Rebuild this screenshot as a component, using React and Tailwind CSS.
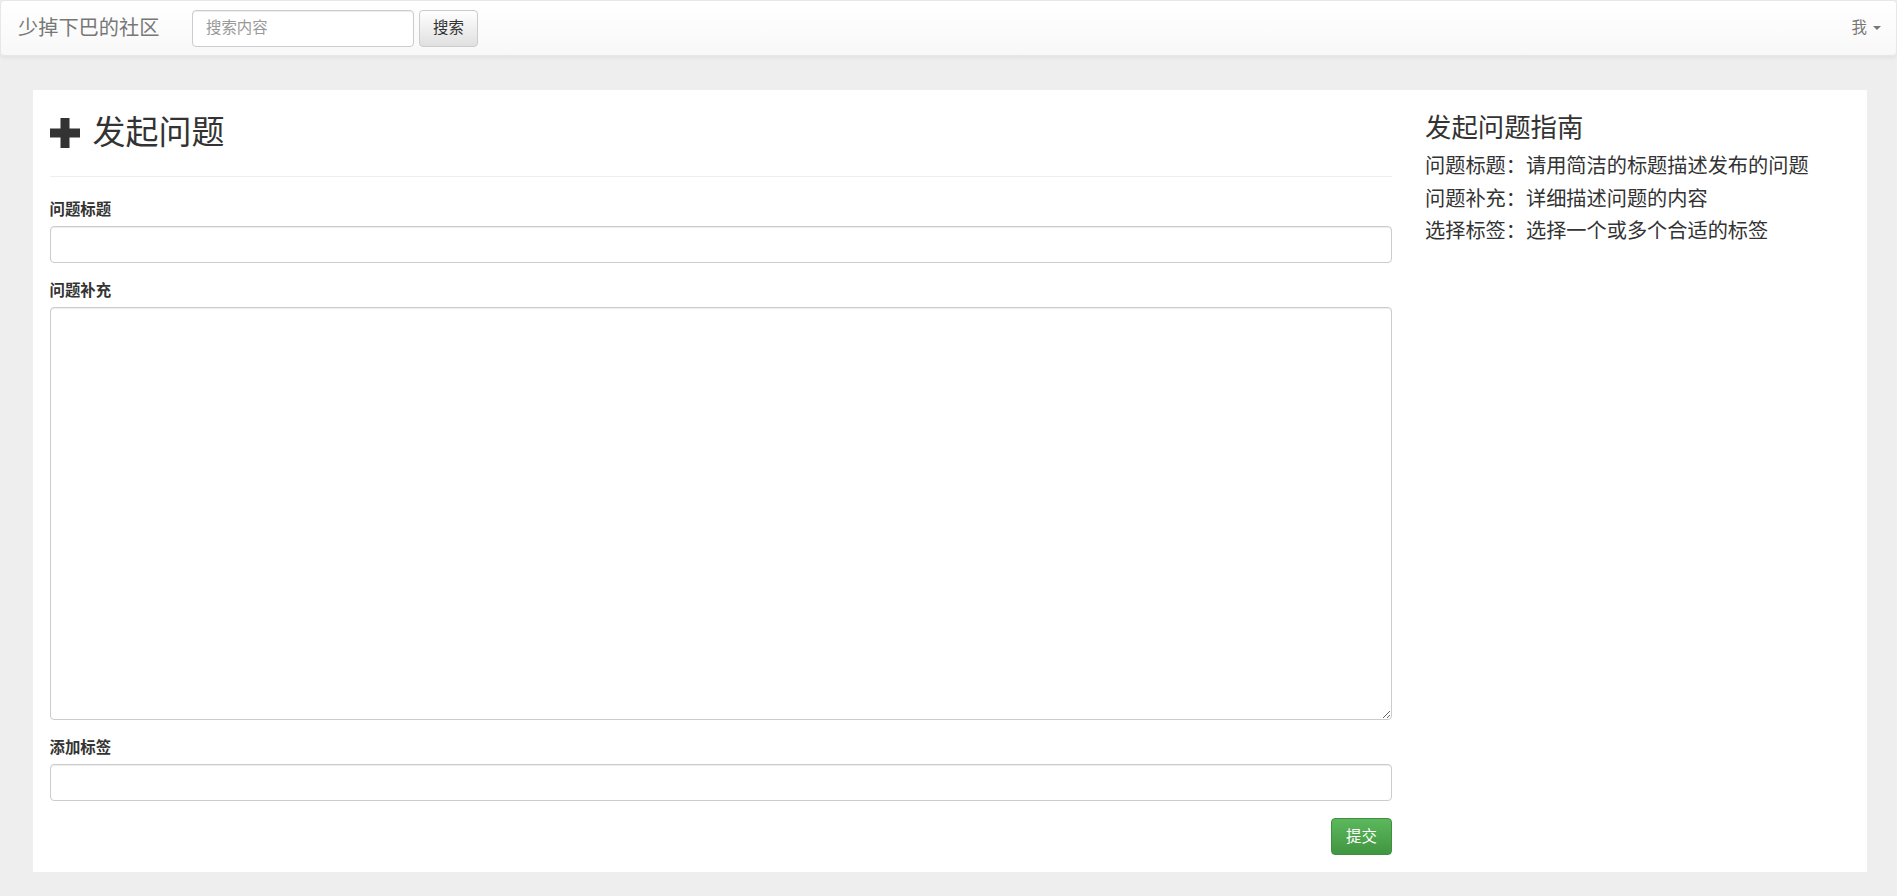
import React from 'react';

const Navbar = () => (
  <nav className="h-[56px] flex items-center justify-between border border-[#e7e7e7] rounded-[4px] bg-gradient-to-b from-white to-[#f8f8f8] shadow-[0_1px_5px_rgba(0,0,0,0.075)]">
    <div className="flex items-center">
      <span className="w-[191px] pl-[17px] text-[20.2px] text-[#777] leading-[22px]">少掉下巴的社区</span>
      <input
        type="text"
        placeholder="搜索内容"
        className="w-[222px] h-[37px] px-[13px] text-[15.4px] text-[#555] bg-white border border-[#ccc] rounded-[4px] shadow-[inset_0_1px_1px_rgba(0,0,0,0.075)] placeholder:text-[#999] outline-none"
      />
      <button className="ml-[5px] w-[59px] h-[37px] text-[15.4px] text-[#333] border border-[#ccc] rounded-[4px] bg-gradient-to-b from-white to-[#e0e0e0]">
        搜索
      </button>
    </div>
    <div className="flex items-center pr-[15px] text-[15.4px] text-[#777]">
      <span>我</span>
      <span className="ml-[6px] w-0 h-0 border-t-[4.4px] border-t-[#777] border-x-[4.4px] border-x-transparent"></span>
    </div>
  </nav>
);

const Field = ({ label, children }) => (
  <div className="mb-[17px]">
    <label className="block mb-[5px] text-[15.4px] leading-[22px] font-bold text-[#333]">{label}</label>
    {children}
  </div>
);

const inputCls =
  'block w-full h-[37px] px-[13px] text-[15.4px] text-[#555] bg-white border border-[#ccc] rounded-[4px] shadow-[inset_0_1px_1px_rgba(0,0,0,0.075)] outline-none';

const PlusIcon = () => (
  <svg width="30" height="30" viewBox="0 0 30 30" className="shrink-0">
    <rect x="10.5" y="0" width="9" height="30" fill="#333" />
    <rect x="0" y="10.5" width="30" height="9" fill="#333" />
  </svg>
);

export default function App() {
  return (
    <div className="min-h-screen bg-[#eee] font-['Liberation_Sans','Noto_Sans_CJK_SC',sans-serif] text-[#333]">
      <Navbar />
      <div className="mt-[34px] ml-[33px] mr-[30px] bg-white pb-[17px] flex">
        <div className="w-3/4 px-[16.5px]">
          <div className="mt-[25px] h-[36px] flex items-center">
            <PlusIcon />
            <h2 className="ml-[13px] text-[33px] leading-[36px] font-normal text-[#333]">发起问题</h2>
          </div>
          <hr className="mt-[25px] mb-[22px] border-0 border-t border-[#eee]" />
          <Field label="问题标题">
            <input type="text" className={inputCls} />
          </Field>
          <Field label="问题补充">
            <textarea className="block w-full h-[413px] px-[13px] py-[7px] text-[15.4px] text-[#555] bg-white border border-[#ccc] rounded-[4px] shadow-[inset_0_1px_1px_rgba(0,0,0,0.075)] outline-none" />
          </Field>
          <Field label="添加标签">
            <input type="text" className={inputCls} />
          </Field>
          <div className="flex justify-end">
            <button className="w-[61px] h-[37px] text-[15.4px] text-white border border-[#3e8f3e] rounded-[4px] bg-gradient-to-b from-[#5cb85c] to-[#419641]">
              提交
            </button>
          </div>
        </div>
        <div className="w-1/4 px-[16.5px]">
          <h3 className="mt-[24px] text-[26.4px] leading-[29px] font-normal text-[#333]">发起问题指南</h3>
          <div className="mt-[7px] text-[20.2px] leading-[32.5px] text-[#333]">
            <p>问题标题：请用简洁的标题描述发布的问题</p>
            <p>问题补充：详细描述问题的内容</p>
            <p>选择标签：选择一个或多个合适的标签</p>
          </div>
        </div>
      </div>
    </div>
  );
}
